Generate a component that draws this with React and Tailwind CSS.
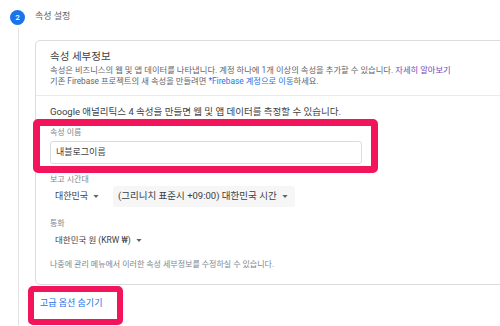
const font = { fontFamily: 'Roboto, "Noto Sans CJK KR", "Noto Sans", sans-serif' }

function Caret() {
  return (
    <svg width="6" height="3" viewBox="0 0 7 4" className="ml-[5px] shrink-0">
      <path d="M0 0h7L3.5 4z" fill="#5f6368" />
    </svg>
  )
}

export default function App() {
  return (
    <div className="relative w-[500px] h-[326px] overflow-hidden bg-white text-[#3c4043]" style={font}>
      <div className="flex h-full">
        {/* step rail */}
        <div className="w-[35px] shrink-0 flex flex-col items-center pt-[10px]">
          <div className="w-[15px] h-[15px] rounded-full bg-[#1a73e8] text-white text-[8px] font-medium flex items-center justify-center">2</div>
          <div className="w-px flex-1 bg-[#e3e3e3] mt-[3px] translate-x-[1px]" />
        </div>

        <div className="flex-1 min-w-0">
          <div className="h-[30px] flex items-center text-[9px] text-[#5f6368] pt-[3px]">속성 설정</div>

          {/* card */}
          <div className="mt-[10px] w-[520px] border border-[#dadce0] rounded-[5px]">
            <div className="pl-[14px] pt-[9px] pb-[8px] border-b border-[#e8eaed]">
              <div className="text-[10.5px] leading-[14px] text-[#3c4043]">속성 세부정보</div>
              <div className="text-[8.3px] leading-[11px] text-[#5f6368] mt-[1px] whitespace-nowrap">
                속성은 비즈니스의 웹 및 앱 데이터를 나타냅니다. 계정 하나에 1개 이상의 속성을 추가할 수 있습니다.{' '}
                <span className="text-[#7b3fb5]">자세히 알아보기</span>
              </div>
              <div className="text-[8.3px] leading-[11px] text-[#5f6368] whitespace-nowrap">
                기존 Firebase 프로젝트의 새 속성을 만들려면 <span className="text-[#1a73e8]">*Firebase 계정으로 이동</span>하세요.
              </div>
            </div>

            <div className="pl-[14px] pt-[9px] pb-[13px]">
              <div className="text-[9.5px] leading-[14px] whitespace-nowrap">Google 애널리틱스 4 속성을 만들면 웹 및 앱 데이터를 측정할 수 있습니다.</div>

              <div className="mt-[8px] text-[8px] leading-[12px] text-[#80868b]">속성 이름</div>
              <div className="mt-[2px] w-[312px] h-[23px] border border-[#dadce0] rounded-[3px] flex items-center pl-[5px] text-[9px]">내블로그이름</div>

              <div className="mt-[10px] text-[8px] leading-[12px] text-[#80868b]">보고 시간대</div>
              <div className="flex items-center text-[9px] whitespace-nowrap">
                <div className="pl-[5px] w-[63px] flex items-center">대한민국<Caret /></div>
                <div className="h-[21px] w-[182px] rounded-[3px] bg-[#f6f6f6] flex items-center pl-[5px] text-[9.5px]">
                  (그리니치 표준시 +09:00) 대한민국 시간<Caret />
                </div>
              </div>

              <div className="mt-[11px] text-[8px] leading-[12px] text-[#80868b]">통화</div>
              <div className="mt-[3px] pl-[5px] flex items-center text-[8.5px] leading-[14px]">대한민국 원 (KRW ₩)<Caret /></div>

              <div className="mt-[12px] text-[8px] leading-[12px] text-[#80868b] whitespace-nowrap">나중에 관리 메뉴에서 이러한 속성 세부정보를 수정하실 수 있습니다.</div>
            </div>
          </div>

          <div className="mt-[12px] pl-[5px] text-[9px] leading-[13px] text-[#1a73e8]">고급 옵션 숨기기</div>
        </div>
      </div>

      {/* annotation highlights */}
      <div className="absolute left-[33px] top-[119px] w-[345px] h-[54px] border-[7px] border-[#f3155c] rounded-[5px]" />
      <div className="absolute left-[28px] top-[286px] w-[95px] h-[39px] border-[6px] border-[#f3155c] rounded-[5px]" />
    </div>
  )
}
